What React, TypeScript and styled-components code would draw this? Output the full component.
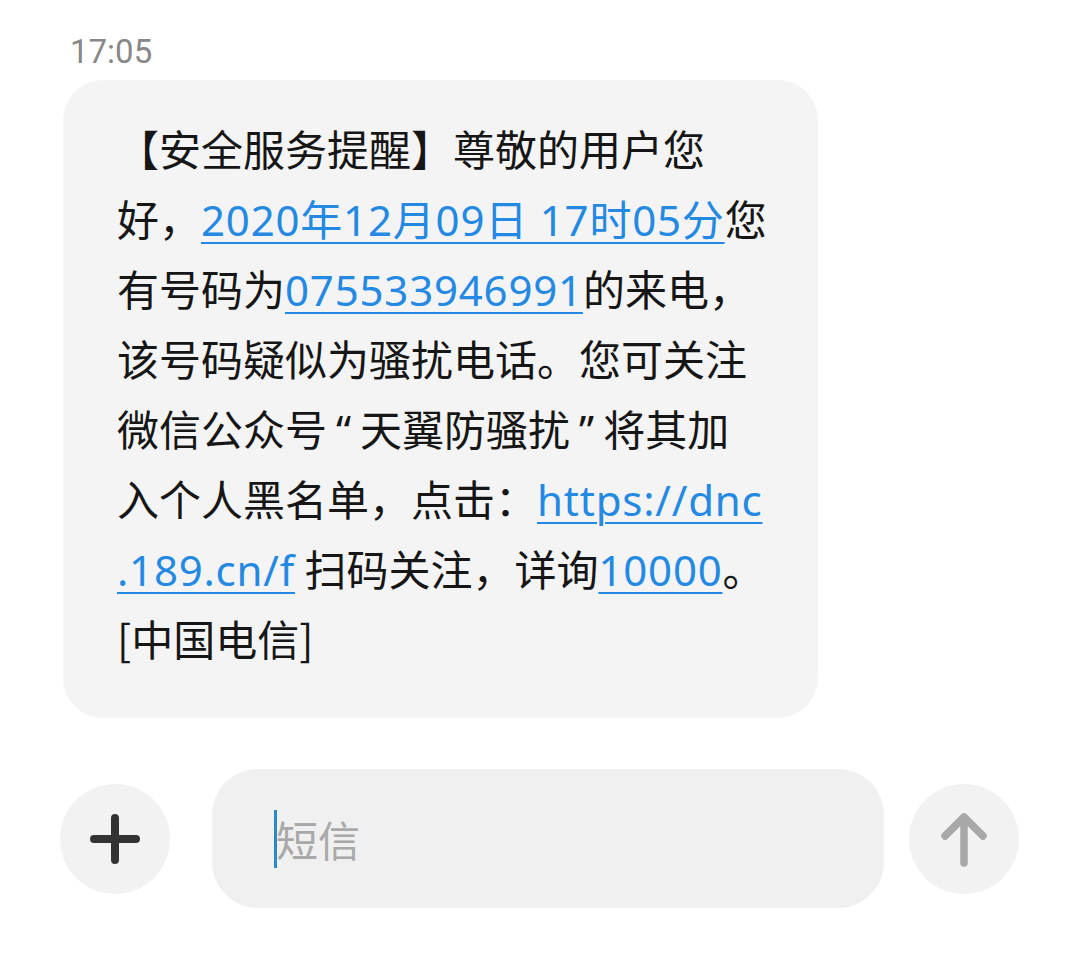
import styled, { createGlobalStyle } from 'styled-components'

const GlobalStyle = createGlobalStyle`
  html, body {
    margin: 0;
    padding: 0;
    background: #ffffff;
  }
  body {
    font-family: "Noto Sans", "Noto Sans CJK SC", sans-serif;
  }
`

const Page = styled.main`
  width: 1080px;
  height: 956px;
  box-sizing: border-box;
  padding: 36px 61px 0 60px;
  display: flex;
  flex-direction: column;
`

const Time = styled.div`
  font-family: Roboto, "Noto Sans CJK SC", sans-serif;
  font-size: 33px;
  line-height: 32px;
  color: #888888;
  margin-left: 10px;
`

const Bubble = styled.section`
  align-self: flex-start;
  margin: 12px 0 0 3px;
  width: 755px;
  box-sizing: border-box;
  padding: 33px 54px 45px 54px;
  background: #f4f4f4;
  border-radius: 40px;
`

const Message = styled.p`
  margin: 0;
  font-family: "Noto Sans CJK SC", sans-serif;
  font-size: 42px;
  line-height: 70px;
  color: #161616;
  white-space: nowrap;
`

const Link = styled.a`
  font-family: "Noto Sans", "Noto Sans CJK SC", sans-serif;
  line-height: 1;
  color: #2389e2;
  text-decoration: underline;
  text-decoration-thickness: 2px;
  text-underline-offset: 6px;
  letter-spacing: 0.8px;
`

const Quote = styled.span`
  font-family: "Noto Sans", sans-serif;
  line-height: 1;
  padding: 0 9px;
`

const Composer = styled.div`
  margin-top: 51px;
  display: flex;
  align-items: center;
`

const RoundButton = styled.button`
  flex: none;
  width: 110px;
  height: 110px;
  border: none;
  border-radius: 50%;
  background: #f2f2f2;
  padding: 0;
  display: flex;
  align-items: center;
  justify-content: center;
`

const Input = styled.div`
  flex: none;
  width: 672px;
  height: 139px;
  margin: 0 25px 0 42px;
  box-sizing: border-box;
  padding-left: 62px;
  border-radius: 46px;
  background: #f0f0f0;
  display: flex;
  align-items: center;
`

const Caret = styled.span`
  width: 3px;
  height: 58px;
  background: #2b8ac6;
  margin-right: -1px;
`

const Placeholder = styled.span`
  font-family: "Noto Sans CJK SC", sans-serif;
  font-size: 42px;
  color: #a9a9a9;
  line-height: 1;
`

function PlusIcon() {
  return (
    <svg width="50" height="50" viewBox="0 0 50 50">
      <path d="M25 4 V46 M4 25 H46" stroke="#333333" strokeWidth="8" strokeLinecap="round" fill="none" />
    </svg>
  )
}

function ArrowUpIcon() {
  return (
    <svg width="50" height="60" viewBox="0 0 50 60">
      <path
        d="M25 8 V54 M6 27 L25 8 L44 27"
        stroke="#a8a8a8"
        strokeWidth="7.5"
        strokeLinecap="round"
        strokeLinejoin="round"
        fill="none"
      />
    </svg>
  )
}

export default function App() {
  return (
    <>
      <GlobalStyle />
      <Page>
        <Time>17:05</Time>
        <Bubble>
          <Message>
            【安全服务提醒】尊敬的用户您
            <br />
            好，<Link href="#">2020年12月09日 17时05分</Link>您
            <br />
            有号码为<Link href="#">075533946991</Link>的来电，
            <br />
            该号码疑似为骚扰电话。您可关注
            <br />
            微信公众号<Quote>“</Quote>天翼防骚扰<Quote>”</Quote>将其加
            <br />
            入个人黑名单，点击：<Link href="#">https://dnc</Link>
            <br />
            <Link href="#">.189.cn/f</Link> 扫码关注，详询<Link href="#">10000</Link>。
            <br />
            [中国电信]
          </Message>
        </Bubble>
        <Composer>
          <RoundButton aria-label="add">
            <PlusIcon />
          </RoundButton>
          <Input>
            <Caret />
            <Placeholder>短信</Placeholder>
          </Input>
          <RoundButton aria-label="send">
            <ArrowUpIcon />
          </RoundButton>
        </Composer>
      </Page>
    </>
  )
}
